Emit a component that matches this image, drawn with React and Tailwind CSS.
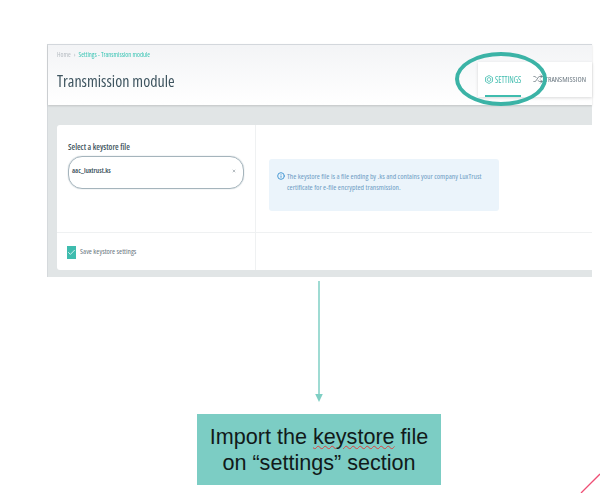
import { Shuffle, Check, Info, X } from 'lucide-react';

const App = () => {
  return (
    <div className="relative w-[600px] h-[493px] overflow-hidden bg-white font-['Open_Sans',sans-serif] [font-stretch:75%]">
      <div className="pt-[44px] pl-[47px]">
        {/* app screenshot */}
        <div className="w-[545px] h-[233px] bg-[#e1e5e6] border-l border-[#d5d9dc] flex flex-col blur-[0.4px]">
          <div className="relative h-[61px] shrink-0 bg-gradient-to-b from-[#f3f4f6] to-white border-t border-[#d3d7dc] shadow-[0_1px_2px_rgba(0,0,0,0.15)] flex flex-col pl-[9px]">
            <div className="mt-[6px] flex items-center gap-[3px] text-[6.7px] leading-[8px]">
              <span className="text-[#b6bcc2]">Home</span>
              <span className="text-[#b6bcc2]">›</span>
              <span className="text-[#3cc5b5]">Settings - Transmission module</span>
            </div>
            <h1 className="mt-[12px] text-[16px] leading-[20px] text-[#3f5560]">Transmission module</h1>
            <div className="absolute right-0 top-[17px] w-[114px] h-[35px] bg-white shadow-[0_1px_3px_rgba(0,0,0,0.15)] flex items-center">
              <div className="relative h-full w-[55px] flex items-center pl-[7px] gap-[2px] text-[#3fbcae]">
                <svg width="8" height="9" viewBox="0 0 8 9" fill="none" stroke="currentColor" strokeWidth="0.8">
                  <path d="M4 .5L7.5 2.5V6.5L4 8.5L.5 6.5V2.5Z" />
                  <path d="M4 2.5L5.7 3.5V5.5L4 6.5L2.3 5.5V3.5Z" />
                </svg>
                <span className="text-[8px]">SETTINGS</span>
                <div className="absolute bottom-[0px] left-[7px] w-[36px] h-[2px] bg-[#3fbcae]" />
              </div>
              <div className="flex items-center gap-[3px] text-[#6a7780]">
                <Shuffle size={10} strokeWidth={1.5} className="text-[#3f4f5a]" />
                <span className="text-[7.7px] -ml-[1px]">TRANSMISSION</span>
              </div>
            </div>
          </div>
          <div className="mt-[20px] ml-[9px] h-[145px] bg-white rounded-tl-[3px] rounded-bl-[3px] flex flex-col">
            <div className="flex h-[108px] border-b border-[#eff1f2]">
              <div className="w-[199px] border-r border-[#eff1f2] px-[11px] pt-[16px]">
                <div className="text-[8.3px] leading-[11px] font-semibold text-[#3f5560]">Select a keystore file</div>
                <div className="mt-[4px] h-[33px] rounded-[14px] border border-[#a5b4bc] flex items-center justify-between pl-[3px] pr-[7px] pb-[3px] shadow-[0_0_1px_rgba(80,110,125,0.6)]">
                  <span className="text-[7px] font-semibold text-[#2f4650]">aac_luxtrust.ks</span>
                  <X size={4} strokeWidth={3} className="text-[#6f7d85]" />
                </div>
              </div>
              <div className="flex-1 pl-[13px] pt-[34px]">
                <div className="w-[230px] h-[52px] rounded-[3px] bg-[#ebf4fb] flex gap-[2px] pl-[8px] pt-[12px]">
                  <Info size={8} strokeWidth={3} className="mt-[1px] shrink-0 text-[#4a9ad4]" />
                  <p className="w-[208px] text-[7.6px] leading-[11px] text-[#6d9cc4]">The keystore file is a file ending by .ks and contains your company LuxTrust certificate for e-file encrypted transmission.</p>
                </div>
              </div>
            </div>
            <div className="flex flex-1">
              <div className="w-[199px] border-r border-[#eff1f2] pl-[10px] flex items-center gap-[4px] pt-[1px]">
                <div className="w-[9px] h-[13px] bg-[#3fbcae] flex items-center justify-center">
                  <Check size={9} strokeWidth={2} className="text-white" />
                </div>
                <span className="text-[7.5px] text-[#6a7780]">Save keystore settings</span>
              </div>
            </div>
          </div>
        </div>

        {/* arrow down */}
        <svg width="10" height="122" viewBox="0 0 10 122" className="block ml-[267px] mt-[4px]">
          <path d="M5 0V115" stroke="#7fcfc4" strokeWidth="1.5" fill="none" />
          <path d="M1.2 113H8.8L5 121Z" fill="#7fcfc4" />
        </svg>

        {/* caption */}
        <div className="ml-[150px] mt-[11px] w-[244px] h-[71px] bg-[#7ccdc4] flex flex-col items-center justify-center font-['Liberation_Sans',sans-serif] text-[21.6px] leading-[26px] text-[#111a1a]">
          <div>Import the <span className="underline decoration-wavy decoration-[#e0403f] decoration-1">keystore</span> file</div>
          <div>on “settings” section</div>
        </div>
      </div>

      {/* circle highlight over the tab */}
      <div className="absolute left-[455px] top-[52px] w-[92px] h-[54px] rounded-[50%] border-[4px] border-[#3bb3a6]" />

      {/* corner line */}
      <svg width="20" height="21" viewBox="0 0 20 21" className="absolute left-[580px] top-[472px]">
        <path d="M1 21L20 2" stroke="#ee4f75" strokeWidth="1.3" fill="none" />
      </svg>
    </div>
  );
};

export default App;
